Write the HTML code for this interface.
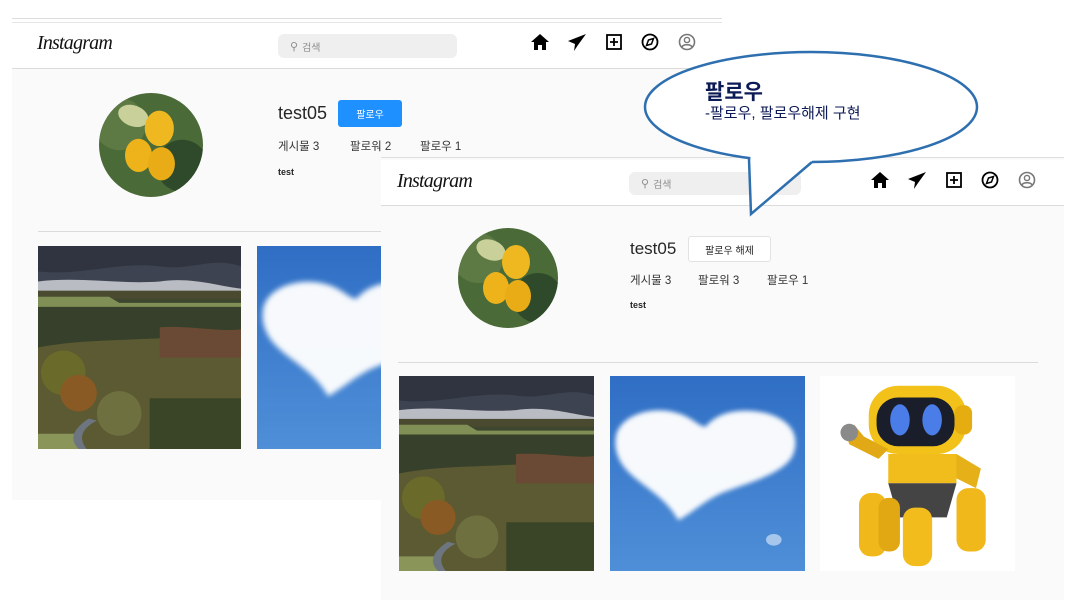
<!DOCTYPE html>
<html><head><meta charset="utf-8"><style>
*{margin:0;padding:0;box-sizing:border-box}
body{width:1080px;height:600px;background:#fff;position:relative;overflow:hidden;font-family:"Liberation Sans","Noto Sans CJK KR",sans-serif;color:#262626}
.a{position:absolute}
.panel{background:#fafafa}
.hdr{background:#fff;border-bottom:1px solid #dbdbdb}
.logo{font-family:"Liberation Serif",serif;font-style:italic;font-size:20px;letter-spacing:-0.8px;color:#111}
.search{background:#efefef;border-radius:6px;font-size:10px;color:#8e8e8e;padding-left:12px;display:flex;align-items:center;gap:4px}
.stats{font-size:11.5px;color:#333}
svg.img{position:absolute;display:block}
</style></head><body>
<svg width="0" height="0" style="position:absolute">
<defs>
<symbol id="land" viewBox="0 0 200 200" preserveAspectRatio="none">
<rect width="200" height="200" fill="#3f4630"/>
<rect width="200" height="45" fill="#3d4350"/>
<path d="M0 0H200V20C170 10 150 25 120 20 80 15 40 30 0 25Z" fill="#2f3440"/>
<path d="M0 35C40 30 80 38 120 35 150 30 180 40 200 42V50H0Z" fill="#b9bcc2"/>
<rect y="44" width="200" height="8" fill="#4a4a30"/>
<path d="M0 50H70L80 56H200V68H0Z" fill="#7f8f55"/>
<path d="M0 60H200V100H0Z" fill="#36402a"/>
<path d="M0 100C50 90 100 95 200 85V200H0Z" fill="#5b5a32"/>
<path d="M120 80C150 78 180 85 200 82V110H120Z" fill="#6a4a35"/>
<circle cx="25" cy="125" r="22" fill="#6a6a2a"/>
<circle cx="40" cy="145" r="18" fill="#8a5a24"/>
<circle cx="80" cy="165" r="22" fill="#6f7040"/>
<path d="M110 150H200V200H110Z" fill="#3a4528"/>
<path d="M0 185H40V200H0Z" fill="#8a955a"/>
<path d="M50 170C35 180 30 190 40 200H48C40 190 42 180 58 172Z" fill="#6d7580"/>
</symbol>
<symbol id="heart" viewBox="0 0 200 200" preserveAspectRatio="none">
<defs><linearGradient id="sky" x1="0" y1="0" x2="0" y2="1"><stop offset="0" stop-color="#2f6ec4"/><stop offset="1" stop-color="#4f8fd8"/></linearGradient>
<filter id="bl"><feGaussianBlur stdDeviation="2.5"/></filter></defs>
<rect width="200" height="200" fill="url(#sky)"/>
<path d="M6 62C10 40 45 28 75 40 88 46 92 52 98 52 110 38 130 32 160 38 185 45 195 60 188 80 180 100 140 110 120 118 100 125 85 140 70 148 55 120 25 110 12 90 5 78 5 70 6 62Z" fill="#fff" opacity=".96" filter="url(#bl)"/>
<ellipse cx="168" cy="168" rx="8" ry="6" fill="#cfe0f5" opacity=".7"/>
</symbol>
<symbol id="lemon" viewBox="0 0 100 100">
<rect width="100" height="100" fill="#4a6a38"/>
<circle cx="20" cy="30" r="25" fill="#5d7a45"/>
<circle cx="80" cy="70" r="25" fill="#2f4a2a"/>
<ellipse cx="33" cy="22" rx="15" ry="10" fill="#c9d09a" transform="rotate(20 33 22)"/>
<ellipse cx="58" cy="34" rx="14" ry="17" fill="#f0b820"/>
<ellipse cx="38" cy="60" rx="13" ry="16" fill="#eeb31a"/>
<ellipse cx="60" cy="68" rx="13" ry="16" fill="#e9ac16"/>
</symbol>
<symbol id="robot" viewBox="0 0 200 200">
<rect width="200" height="200" fill="#fff"/>
<rect x="50" y="10" width="100" height="70" rx="30" fill="#f2c21b"/>
<rect x="58" y="22" width="80" height="50" rx="22" fill="#1a1d2a"/>
<ellipse cx="82" cy="45" rx="10" ry="16" fill="#4a7de8"/>
<ellipse cx="115" cy="45" rx="10" ry="16" fill="#4a7de8"/>
<rect x="138" y="30" width="18" height="30" rx="8" fill="#e6ad10"/>
<path d="M70 80H140V110H70Z" fill="#f0bd1c"/>
<path d="M60 85L30 70 25 55 35 50 45 62 70 75Z" fill="#e0a915"/>
<circle cx="30" cy="58" r="9" fill="#8a8a8a"/>
<path d="M140 80L165 95 160 115 140 105Z" fill="#e5b018"/>
<path d="M70 110H140L130 145H80Z" fill="#444"/>
<rect x="40" y="120" width="28" height="65" rx="12" fill="#f0b81a"/>
<rect x="140" y="115" width="30" height="65" rx="12" fill="#f0b81a"/>
<rect x="85" y="135" width="30" height="60" rx="12" fill="#f2bd1c"/>
<rect x="60" y="125" width="22" height="55" rx="10" fill="#e2a814"/>
</symbol>
<symbol id="icons" viewBox="0 0 180 20">
<path d="M1 10L10 2 19 10 16 10 16 18 12 18 12 13 8 13 8 18 4 18 4 10Z" fill="#000"/>
<path d="M56 2L38 9 45 12Z M56 2L45 12 44 19 48 13Z" fill="#000"/>
<rect x="77" y="3" width="14" height="14" fill="none" stroke="#000" stroke-width="1.8"/>
<path d="M84 6V14M80 10H88" stroke="#000" stroke-width="1.8"/>
<circle cx="120" cy="10" r="7.5" fill="none" stroke="#000" stroke-width="1.8"/>
<path d="M123.5 6.5L121.5 12 116.5 13.5 118.5 8Z" fill="none" stroke="#000" stroke-width="1.5"/>
<circle cx="157" cy="10" r="7.5" fill="none" stroke="#777" stroke-width="1.6"/>
<circle cx="157" cy="8" r="2.6" fill="none" stroke="#777" stroke-width="1.4"/>
<path d="M152 15C153 12 161 12 162 15" fill="none" stroke="#777" stroke-width="1.4"/>
</symbol>
</defs></svg>

<!-- Panel 1 -->
<div class="a" style="left:12px;top:18px;width:710px;height:1px;background:#ddd"></div>
<div class="a panel" style="left:12px;top:22px;width:710px;height:478px"></div>
<div class="a hdr" style="left:12px;top:22px;width:710px;height:47px;border-top:1px solid #e6e6e6"></div>
<div class="a logo" style="left:37px;top:32px">Instagram</div>
<div class="a search" style="left:278px;top:34px;width:179px;height:24px"><span style="font-size:11px">&#9906;</span>검색</div>
<svg class="img" style="left:530px;top:32px" width="180" height="20"><use href="#icons"/></svg>
<svg class="img" style="left:99px;top:93px;border-radius:50%" width="104" height="104"><use href="#lemon"/></svg>
<div class="a" style="left:278px;top:103px;font-size:18px;color:#262626">test05</div>
<div class="a" style="left:338px;top:100px;width:64px;height:27px;background:#1e90ff;border-radius:3px;color:#fff;font-size:10px;display:flex;align-items:center;justify-content:center">팔로우</div>
<div class="a stats" style="left:278px;top:138px">게시물 3</div>
<div class="a stats" style="left:350px;top:138px">팔로워 2</div>
<div class="a stats" style="left:420px;top:138px">팔로우 1</div>
<div class="a" style="left:278px;top:167px;font-size:9px;font-weight:bold">test</div>
<div class="a" style="left:38px;top:231px;width:345px;height:1px;background:#dbdbdb"></div>
<svg class="img" style="left:38px;top:246px" width="203" height="203"><use href="#land"/></svg>
<svg class="img" style="left:257px;top:246px" width="124" height="203" viewBox="0 0 124 203" preserveAspectRatio="xMinYMin slice"><use href="#heart" width="203" height="203"/></svg>

<!-- Panel 2 -->
<div class="a panel" style="left:381px;top:157px;width:683px;height:443px;border-top:1px solid #ddd"></div>
<div class="a hdr" style="left:381px;top:160px;width:683px;height:46px"></div>
<div class="a logo" style="left:397px;top:170px">Instagram</div>
<div class="a search" style="left:629px;top:172px;width:172px;height:23px"><span style="font-size:11px">&#9906;</span>검색</div>
<svg class="img" style="left:870px;top:170px" width="180" height="20"><use href="#icons"/></svg>
<svg class="img" style="left:458px;top:228px;border-radius:50%" width="100" height="100"><use href="#lemon"/></svg>
<div class="a" style="left:630px;top:239px;font-size:17px;color:#262626">test05</div>
<div class="a" style="left:688px;top:236px;width:83px;height:26px;background:#fff;border:1px solid #e2e2e2;border-radius:3px;font-size:10px;display:flex;align-items:center;justify-content:center">팔로우 해제</div>
<div class="a stats" style="left:630px;top:272px">게시물 3</div>
<div class="a stats" style="left:698px;top:272px">팔로워 3</div>
<div class="a stats" style="left:767px;top:272px">팔로우 1</div>
<div class="a" style="left:630px;top:300px;font-size:9px;font-weight:bold">test</div>
<div class="a" style="left:398px;top:362px;width:640px;height:1px;background:#dbdbdb"></div>
<svg class="img" style="left:399px;top:376px" width="195" height="195"><use href="#land"/></svg>
<svg class="img" style="left:610px;top:376px" width="195" height="195"><use href="#heart"/></svg>
<svg class="img" style="left:820px;top:376px" width="195" height="195"><use href="#robot"/></svg>

<!-- Bubble -->
<svg class="img" style="left:0;top:0" width="1080" height="600">
<ellipse cx="811" cy="107" rx="166" ry="55" fill="#fff" stroke="#2e6fb0" stroke-width="2.5"/>
<polygon points="751,150 812,150 812,164 751,214 750,164" fill="#fff"/>
<polyline points="749,159 751,214 812,162" fill="none" stroke="#2e6fb0" stroke-width="2.5"/>
</svg>
<div class="a" style="left:705px;top:76px;font-size:21px;font-weight:bold;color:#0c1a55">팔로우</div>
<div class="a" style="left:705px;top:102px;font-size:15px;color:#0c1a55">-팔로우, 팔로우해제 구현</div>
</body></html>
